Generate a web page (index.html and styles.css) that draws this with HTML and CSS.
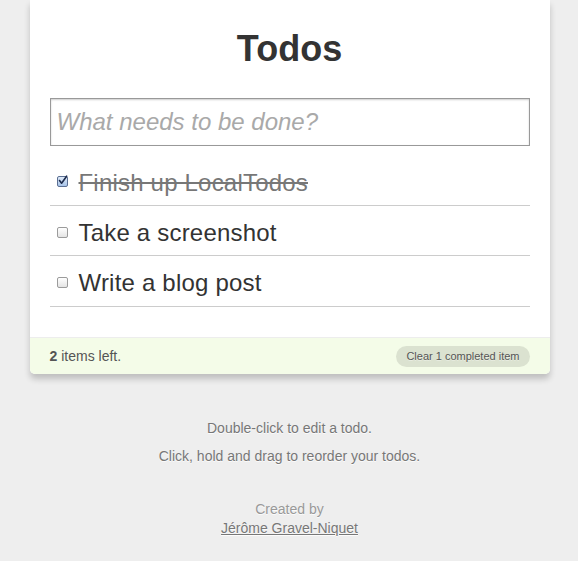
FILE: index.html
```html
<!DOCTYPE html>
<html>
<head>
<meta charset="utf-8">
<title>Todos</title>
<link rel="stylesheet" href="styles.css">
</head>
<body>
<div class="todoapp">
  <h1 class="title">Todos</h1>
  <div class="create">
    <input class="new-todo" type="text" placeholder="What needs to be done?">
  </div>
  <ul class="todo-list">
    <li class="todo done">
      <span class="check checked"><svg viewBox="0 0 11 11" width="11" height="11"><path d="M2.5 5.5 L4.6 8.2 L9.6 1.2" fill="none" stroke="#1d2b4c" stroke-width="1.6" stroke-linecap="round" stroke-linejoin="round"/></svg></span>
      <span class="todo-content">Finish up LocalTodos</span>
    </li>
    <li class="todo">
      <span class="check"></span>
      <span class="todo-content">Take a screenshot</span>
    </li>
    <li class="todo">
      <span class="check"></span>
      <span class="todo-content">Write a blog post</span>
    </li>
  </ul>
  <div class="todo-stats">
    <span class="todo-count"><b class="number">2</b> items left.</span>
    <span class="todo-clear"><a class="clear-btn">Clear 1 completed item</a></span>
  </div>
</div>
<div class="instructions">
  <div class="line">Double-click to edit a todo.</div>
  <div class="line">Click, hold and drag to reorder your todos.</div>
</div>
<div class="credits">
  Created by<br>
  <a class="author" href="#">Jérôme Gravel-Niquet</a>
</div>
</body>
</html>
```

FILE: styles.css
```css
html, body {
  margin: 0;
  padding: 0;
}
body {
  font: 14px "Liberation Sans", Arial, Helvetica, sans-serif;
  line-height: 1.4em;
  background: #eeeeee;
  color: #333333;
  padding-left: 1px;
}
.todoapp {
  width: 480px;
  margin: 0 auto 40px;
  background: #ffffff;
  padding: 20px;
  border-radius: 0 0 5px 5px;
  box-shadow: rgba(0, 0, 0, 0.2) 0 5px 6px 0;
}
.title {
  margin: 0;
  font-size: 36px;
  font-weight: bold;
  text-align: center;
  padding: 11px 0 31px 0;
  line-height: 36px;
  color: #333333;
}
.new-todo {
  display: block;
  width: 466px;
  margin: 0;
  font-size: 24px;
  font-family: inherit;
  line-height: 1.4em;
  height: 33.6px;
  outline: none;
  padding: 6px;
  border: 1px solid #999999;
  box-shadow: rgba(0, 0, 0, 0.2) 0 1px 2px 0 inset;
  color: #333333;
}
.new-todo::placeholder {
  font-style: italic;
  color: #a9a9a9;
}
.todo-list {
  list-style: none;
  margin: 10px 0 0;
  padding: 0;
}
.todo {
  display: flex;
  align-items: center;
  padding: 14px 20px 9px 0;
  font-size: 24px;
  line-height: 1.1em;
  border-bottom: 1px solid #cccccc;
}
.check {
  box-sizing: border-box;
  width: 11px;
  height: 11px;
  margin: 0 11px 0 7px;
  border: 1px solid #9b9b9b;
  border-radius: 2px;
  background: linear-gradient(#ffffff, #e4e4e4);
  flex: none;
  position: relative;
  top: -1px;
}
.check.checked {
  border-color: #5b6f93;
  background: linear-gradient(#dfeaf8, #a7c3e8);
}
.check svg {
  position: absolute;
  left: -1px;
  top: -2px;
}
.todo-content {
  color: #333333;
  letter-spacing: 0.2px;
}
.done .todo-content {
  text-decoration: line-through;
  color: #777777;
}
.todo-stats {
  margin: 30px -20px -20px;
  color: #555555;
  border-radius: 0 0 5px 5px;
  background: #f4fce8;
  border-top: 1px solid #ededed;
  padding: 0 20px;
  line-height: 36px;
  height: 36px;
  display: flex;
  justify-content: space-between;
  align-items: flex-start;
}
.number {
  font-weight: bold;
  color: #555555;
}
.clear-btn {
  display: block;
  line-height: 20px;
  text-decoration: none;
  border-radius: 12px;
  background: rgba(0, 0, 0, 0.1);
  color: #555555;
  font-size: 11px;
  margin-top: 8px;
  padding: 0 10px 1px;
  cursor: pointer;
  text-shadow: 0 1px 0 rgba(255, 255, 255, 0.4);
}
.instructions {
  width: 520px;
  margin: 0 auto;
  color: #777777;
  text-shadow: rgba(255, 255, 255, 0.8) 0 1px 0;
  text-align: center;
}
.instructions .line {
  line-height: 28px;
}
.credits {
  width: 520px;
  margin: 30px auto;
  color: #999999;
  text-shadow: rgba(255, 255, 255, 0.8) 0 1px 0;
  text-align: center;
  line-height: 19.6px;
}
.author {
  color: #777777;
}
```
